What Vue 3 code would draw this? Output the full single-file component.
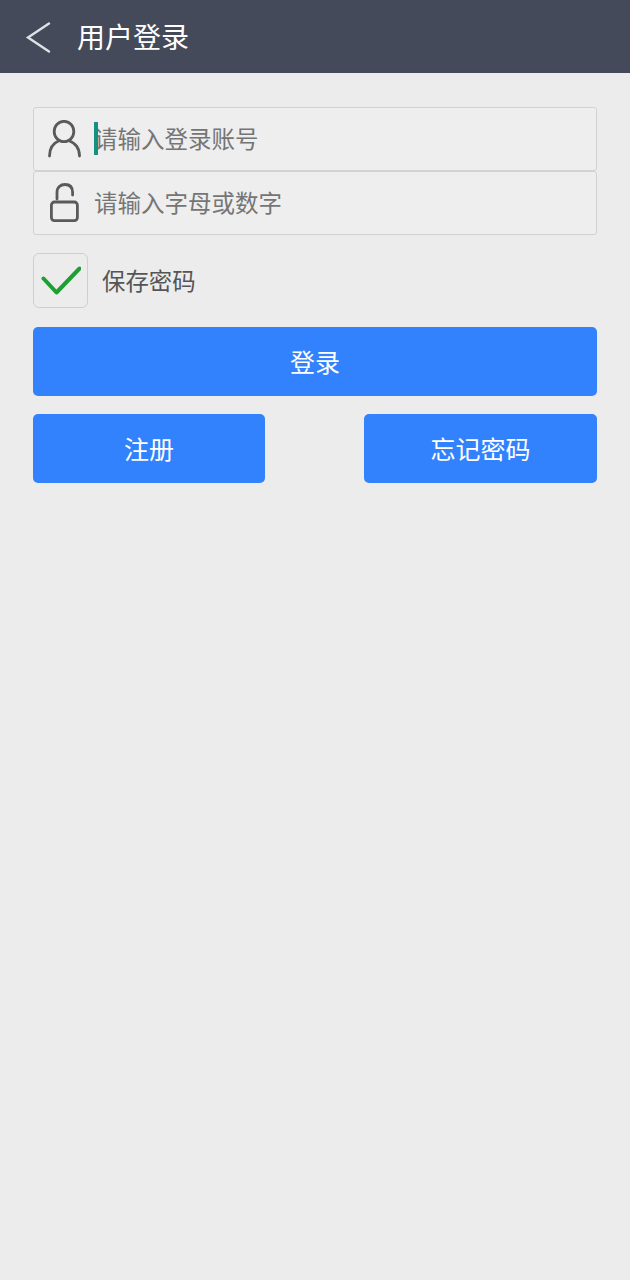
<script setup>
const fields = [
  { key: "user", text: "请输入登录账号", caret: true },
  { key: "pass", text: "请输入字母或数字", caret: false },
];
</script>

<template>
  <div class="page">
    <header class="header">
      <svg class="back" width="26" height="32" viewBox="0 0 26 32">
        <path d="M24 2.5 L3 16.5 L24 30.5" fill="none" stroke="#dfe1e5" stroke-width="2.4" stroke-linecap="round" />
      </svg>
      <span class="title">用户登录</span>
    </header>

    <main class="content">
      <div class="fields">
        <div v-for="field in fields" :key="field.key" class="field">
          <svg v-if="field.key === 'user'" class="icon" width="36" height="38" viewBox="0 0 36 38">
            <ellipse cx="17" cy="11.5" rx="9.8" ry="10.2" fill="none" stroke="#5a5a5a" stroke-width="2.8" />
            <path d="M2.5 36 C2.5 27 7.5 22.5 12.5 20.5 M32.5 36 C32.5 27 27 22.5 21.5 20.5" fill="none" stroke="#5a5a5a" stroke-width="2.8" stroke-linecap="round" />
          </svg>
          <svg v-else class="icon" width="36" height="40" viewBox="0 0 36 40">
            <path d="M10 16 V9.5 C10 4 13.5 1.5 18 1.5 C22.5 1.5 25.6 4 25.6 9.5 V12" fill="none" stroke="#5a5a5a" stroke-width="2.8" stroke-linecap="round" />
            <rect x="4.4" y="19" width="26" height="18.6" rx="3" fill="none" stroke="#5a5a5a" stroke-width="2.8" />
          </svg>
          <span class="hint">
            <i v-if="field.caret" class="caret"></i>
            {{ field.text }}
          </span>
        </div>
      </div>

      <div class="remember">
        <div class="checkbox">
          <svg width="40" height="30" viewBox="0 0 40 30">
            <path d="M2.5 12.5 L15.5 26.5 L38.5 2.5" fill="none" stroke="#1f9f31" stroke-width="4" stroke-linecap="round" stroke-linejoin="round" />
          </svg>
        </div>
        <span class="remember-text">保存密码</span>
      </div>

      <button class="btn btn-login">登录</button>
      <div class="actions">
        <button class="btn btn-register">注册</button>
        <button class="btn btn-forget">忘记密码</button>
      </div>
    </main>
  </div>
</template>

<style>
html,
body {
  background: #ececec;
}
</style>

<style scoped>
.page {
  min-height: 1280px;
  background: #ececec;
  font-family: "Noto Sans CJK SC", "Liberation Sans", sans-serif;
}

.header {
  height: 73px;
  display: flex;
  align-items: center;
  padding-left: 25px;
  background: #454a5a;
}

.back {
  margin-right: 27px;
}

.title {
  margin-left: -1px;
  padding-bottom: 2px;
  font-size: 28px;
  color: #fff;
}

.content {
  padding: 34px 33px 0;
}

.field {
  height: 64px;
  box-sizing: border-box;
  display: flex;
  align-items: center;
  padding-left: 13px;
  background: #eeeeee;
  border: 1px solid #d2d2d2;
  border-radius: 3px;
}

.icon {
  flex: none;
  margin-right: 11px;
}

.hint {
  position: relative;
  padding-bottom: 2px;
  font-size: 23.5px;
  color: #757575;
}

.caret {
  position: absolute;
  left: 0;
  top: 1px;
  width: 4px;
  height: 33px;
  background: #17917f;
}

.remember {
  display: flex;
  align-items: center;
  margin-top: 18px;
}

.checkbox {
  width: 55px;
  height: 55px;
  box-sizing: border-box;
  display: flex;
  align-items: center;
  justify-content: center;
  border: 1px solid #cfcfcf;
  border-radius: 6px;
}

.remember-text {
  margin-left: 14px;
  padding-bottom: 2px;
  font-size: 23.4px;
  color: #555555;
}

.btn {
  display: block;
  height: 69px;
  padding: 0 0 2px;
  border: none;
  border-radius: 5px;
  background: #3282fd;
  color: #fff;
  font-family: inherit;
  font-size: 25px;
}

.btn-login {
  width: 100%;
  margin-top: 19px;
}

.actions {
  display: flex;
  justify-content: space-between;
  margin-top: 18px;
}

.btn-register {
  width: 232px;
}

.btn-forget {
  width: 233px;
}
</style>
